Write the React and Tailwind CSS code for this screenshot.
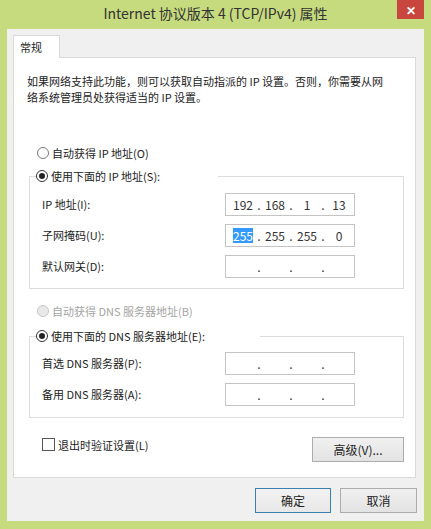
import React from "react";

const FONT = { fontFamily: '"Noto Sans CJK SC", "Noto Sans", sans-serif' };

const Radio = ({ checked, disabled }) => (
    <span
        className={
            "w-[12px] h-[12px] rounded-full border flex items-center justify-center shrink-0 " +
            (disabled ? "border-[#c6c6c6] bg-[#e8e8e8]" : checked ? "border-[#333333] bg-white" : "border-[#7a7a7a] bg-white")
        }
    >
        {checked && <span className="w-[6px] h-[6px] rounded-full bg-[#222222]" />}
    </span>
);

const IpField = ({ parts, selectFirst }) => (
    <div className="w-[130px] h-[23px] border border-[#c4c4c4] bg-white flex items-center pl-[4px] text-[12px] text-[#333333]">
        {[0, 1, 2, 3].map((i) => (
            <React.Fragment key={i}>
                <span className="w-[26px] flex justify-center">
                    {parts && (i === 0 && selectFirst ? (
                        <span className="bg-[#3399ff] text-white leading-[15px]">{parts[i]}</span>
                    ) : (
                        parts[i]
                    ))}
                </span>
                {i < 3 && <span className="w-[6px] flex justify-center">.</span>}
            </React.Fragment>
        ))}
    </div>
);

const Row = ({ label, children }) => (
    <div className="flex items-center">
        <span className="w-[183px]">{label}</span>
        {children}
    </div>
);

const WinButton = ({ children, primary, className }) => (
    <button
        className={
            "h-[25px] text-[12px] text-[#222222] border bg-gradient-to-b " +
            (primary ? "border-[#3c7fb1] from-[#f2f2f2] to-[#e8e8e8] " : "border-[#acacac] from-[#f0f0f0] to-[#e3e3e3] ") +
            className
        }
    >
        {children}
    </button>
);

export default function App() {
    return (
        <div className="w-[431px] h-[529px] bg-[#c6da7e] flex flex-col text-[11px] text-[#222222]" style={FONT}>
            {/* Title bar */}
            <div className="h-[29px] flex items-start relative">
                <div className="flex-1 text-center text-[14px] text-[#333333] pt-[4px] leading-[18px]">
                    Internet 协议版本 4 (TCP/IPv4) 属性
                </div>
                <div className="absolute right-[7px] top-0 w-[27px] h-[19px] bg-[#c9463f] flex items-center justify-center text-white text-[12px] font-bold">
                    ✕
                </div>
            </div>

            {/* Client area */}
            <div className="flex-1 mx-[7px] mb-[8px] bg-[#f0f0f0] pt-[6px] pl-[6px] pr-[7px] flex flex-col">
                {/* Tab */}
                <div className="w-[47px] h-[23px] bg-white border border-b-0 border-[#d9d9d9] pl-[6px] pt-[3px] leading-[16px] relative z-10 -mb-px">
                    常规
                </div>

                {/* Tab page */}
                <div className="w-[403px] h-[421px] bg-white border border-[#d9d9d9] flex flex-col">
                    <p className="pl-[13px] pt-[15px] leading-[16px]">
                        如果网络支持此功能，则可以获取自动指派的 IP 设置。否则，你需要从网
                        <br />
                        络系统管理员处获得适当的 IP 设置。
                    </p>

                    <div className="mt-[40px] ml-[23px] flex items-center gap-[3px] leading-[16px]">
                        <Radio />
                        <span>自动获得 IP 地址(O)</span>
                    </div>

                    <fieldset className="mt-[7px] ml-[15px] w-[375px] border border-[#dcdcdc] pl-[12px] pb-[10px]">
                        <legend className="ml-[-6px] w-[182px] flex items-center gap-[3px] leading-[16px] bg-white">
                            <Radio checked />
                            <span>使用下面的 IP 地址(S):</span>
                        </legend>
                        <div className="pt-[9px] flex flex-col gap-[8px]">
                            <Row label="IP 地址(I):">
                                <IpField parts={["192", "168", "1", "13"]} />
                            </Row>
                            <Row label="子网掩码(U):">
                                <IpField parts={["255", "255", "255", "0"]} selectFirst />
                            </Row>
                            <Row label="默认网关(D):">
                                <IpField />
                            </Row>
                        </div>
                    </fieldset>

                    <div className="mt-[14px] ml-[23px] flex items-center gap-[3px] leading-[16px] text-[#a3a3a3]">
                        <Radio disabled />
                        <span>自动获得 DNS 服务器地址(B)</span>
                    </div>

                    <fieldset className="mt-[9px] ml-[15px] w-[375px] border border-[#dcdcdc] pl-[12px] pb-[11px]">
                        <legend className="ml-[-6px] w-[224px] flex items-center gap-[3px] leading-[16px] bg-white">
                            <Radio checked />
                            <span>使用下面的 DNS 服务器地址(E):</span>
                        </legend>
                        <div className="pt-[8px] flex flex-col gap-[8px]">
                            <Row label="首选 DNS 服务器(P):">
                                <IpField />
                            </Row>
                            <Row label="备用 DNS 服务器(A):">
                                <IpField />
                            </Row>
                        </div>
                    </fieldset>

                    <div className="mt-[19px] pl-[28px] pr-[11px] flex items-center justify-between">
                        <div className="flex items-center gap-[3px] leading-[16px] mt-[-10px]">
                            <span className="w-[13px] h-[13px] border border-[#555555] bg-white" />
                            <span>退出时验证设置(L)</span>
                        </div>
                        <WinButton className="w-[92px]">高级(V)...</WinButton>
                    </div>
                </div>

                {/* Dialog buttons */}
                <div className="mt-[10px] flex justify-end gap-[9px] pr-[0px]">
                    <WinButton primary className="w-[76px]">确定</WinButton>
                    <WinButton className="w-[77px]">取消</WinButton>
                </div>
            </div>
        </div>
    );
}
